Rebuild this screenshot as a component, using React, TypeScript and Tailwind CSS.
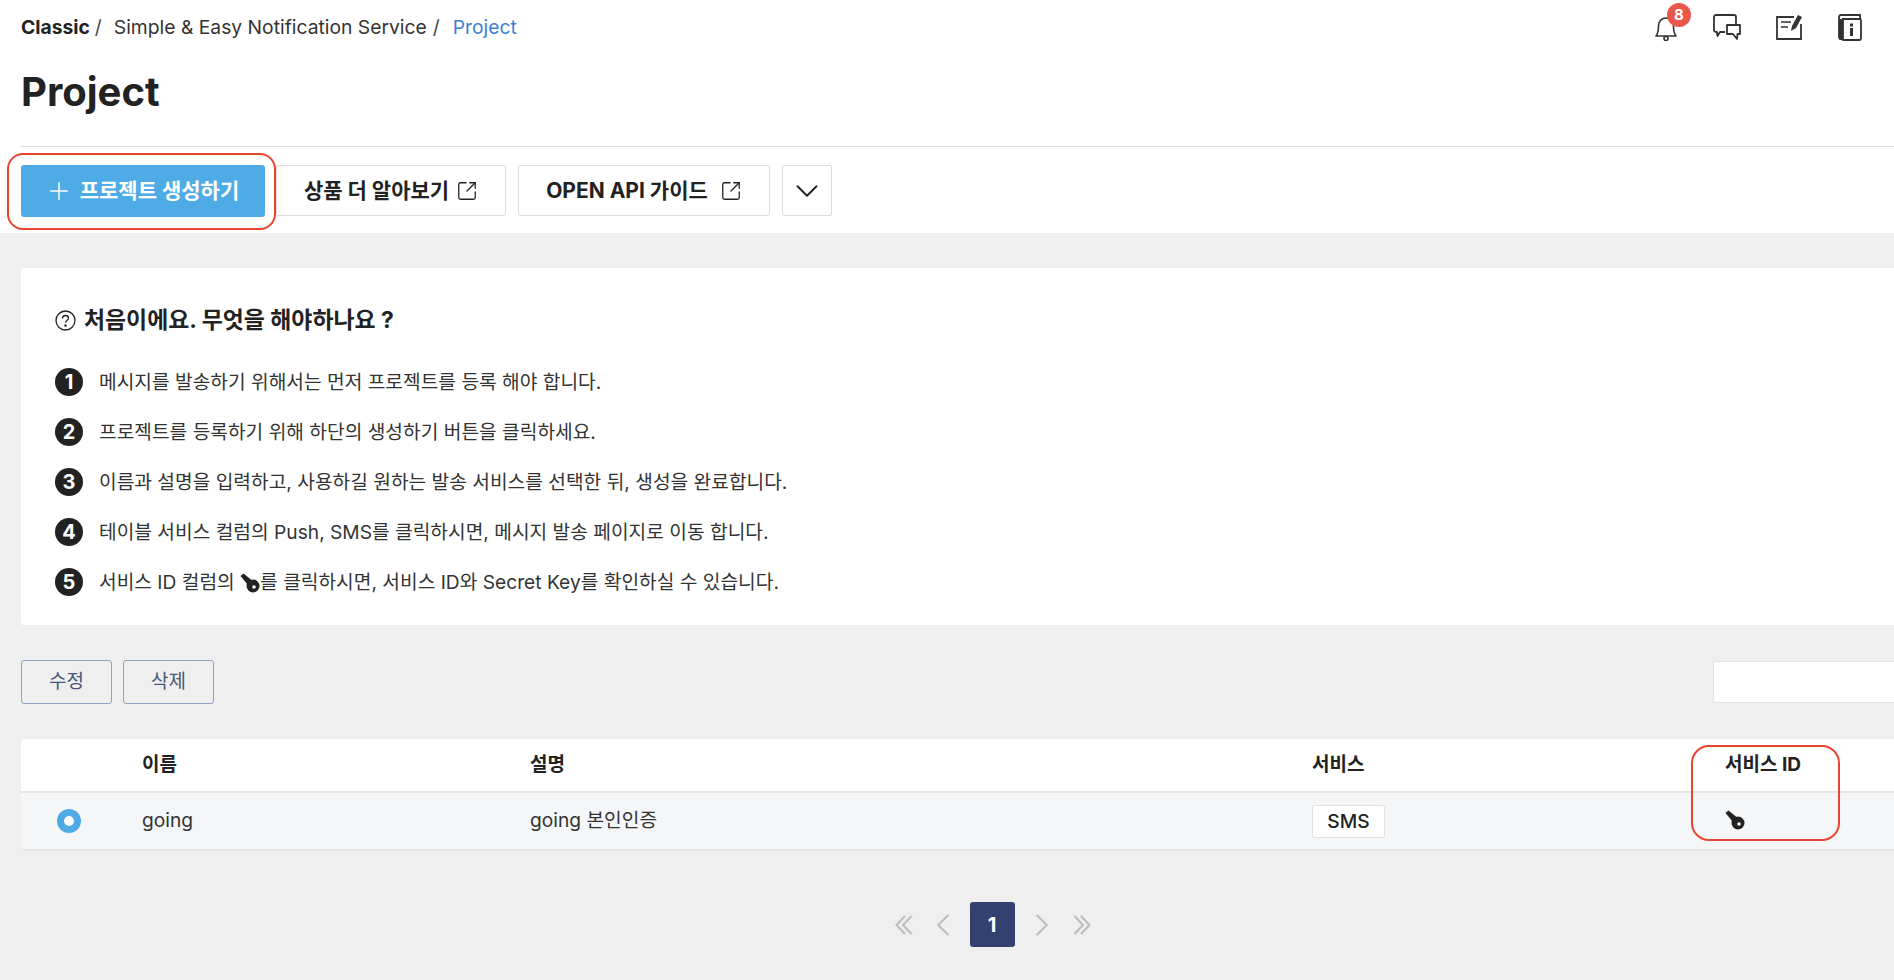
import React from "react";
import { ChevronDown, ChevronLeft, ChevronRight, Plus, SquareArrowOutUpRight } from "lucide-react";

const steps: React.ReactNode[] = [
  "메시지를 발송하기 위해서는 먼저 프로젝트를 등록 해야 합니다.",
  "프로젝트를 등록하기 위해 하단의 생성하기 버튼을 클릭하세요.",
  "이름과 설명을 입력하고, 사용하길 원하는 발송 서비스를 선택한 뒤, 생성을 완료합니다.",
  "테이블 서비스 컬럼의 Push, SMS를 클릭하시면, 메시지 발송 페이지로 이동 합니다.",
  <>
    서비스 ID 컬럼의 <KeyIcon className="inline-block align-[-4px]" />를 클릭하시면, 서비스 ID와 Secret Key를 확인하실 수 있습니다.
  </>,
];

function KeyIcon({ className = "" }: { className?: string }) {
  return (
    <svg width="20" height="20" viewBox="0 0 20 20" className={className}>
      <path d="M0.5 3 L3.5 0.5 L11.5 7 L7.5 11.5 Z" fill="#222" />
      <circle cx="13" cy="13" r="6.5" fill="#222" />
      <circle cx="14" cy="14" r="1.8" fill="#fff" />
    </svg>
  );
}

const BellIcon = () => (
  <svg width="24" height="28" viewBox="0 0 24 28" fill="none" stroke="#333" strokeWidth="1.6">
    <path d="M2 23 C4.5 20 4.5 17 4.5 13 C4.5 8 8 5 12 5 C16 5 19.5 8 19.5 13 C19.5 17 19.5 20 22 23 Z" strokeLinejoin="round" />
    <circle cx="12" cy="25.5" r="2" />
  </svg>
);

const ChatIcon = () => (
  <svg width="28" height="26" viewBox="0 0 28 26" fill="none" stroke="#333" strokeWidth="1.8" strokeLinejoin="round">
    <path d="M12 18 H7 L4.5 22 L4 18 H3 C1.8 18 1 17.2 1 16 V3 C1 1.8 1.8 1 3 1 H21 C22.2 1 23 1.8 23 3 V11" />
    <path d="M14 11 H27 V20 H24.5 L24 25 L20 20 H14 Z" />
  </svg>
);

const NoteIcon = () => (
  <svg width="26" height="26" viewBox="0 0 26 26" fill="none" stroke="#333" strokeWidth="1.8">
    <path d="M18 3 H1 V25 H25 V10" />
    <path d="M5 8 H15 M5 13 H12" strokeWidth="1.6" />
    <path d="M15 17 L16 12 L22 1 L26 3 L20 14 Z" fill="#333" stroke="none" />
  </svg>
);

const BookIcon = () => (
  <svg width="24" height="27" viewBox="0 0 24 27">
    <path d="M3 1 H22 V5 H5 V25 H3 C1.8 25 1 24.2 1 23 V3 C1 1.8 1.8 1 3 1 Z" fill="none" stroke="#333" strokeWidth="1.8" />
    <rect x="1" y="5" width="4" height="21" rx="1.5" fill="#333" />
    <rect x="4" y="5" width="19" height="21" rx="1.5" fill="none" stroke="#333" strokeWidth="1.8" />
    <rect x="12" y="9.5" width="3" height="3" fill="#333" />
    <rect x="12" y="14" width="3" height="8" fill="#333" />
  </svg>
);

const DoubleChevron = ({ flip = false }: { flip?: boolean }) => (
  <svg width="18" height="20" viewBox="0 0 18 20" fill="none" stroke="#bdbdbd" strokeWidth="2" className={flip ? "rotate-180" : ""}>
    <path d="M10 1 L1.5 10 L10 19" />
    <path d="M16.5 1 L8 10 L16.5 19" />
  </svg>
);

const App = () => {
  return (
    <div
      className="relative w-[1894px] h-[980px] overflow-hidden bg-[#efefef] text-[#222]"
      style={{ fontFamily: 'Inter, "Noto Sans CJK KR", sans-serif' }}
    >
      {/* Top area */}
      <header className="h-[233px] bg-white pl-[21px]">
        <div className="flex h-[54px] items-center justify-between">
          <nav className="flex items-center pt-[1px] text-[19.3px]">
            <span className="font-bold">Classic</span>
            <span className="ml-[5px] text-[#444]">/</span>
            <span className="ml-[12px] text-[#333]">Simple &amp; Easy Notification Service</span>
            <span className="ml-[6px] text-[#444]">/</span>
            <span className="ml-[13px] text-[#3d7fd4]">Project</span>
          </nav>
          <div className="flex items-center pr-[32px]">
            <div className="relative mr-[35px]">
              <BellIcon />
              <span className="absolute -top-[10px] left-[13px] flex h-[24px] w-[24px] items-center justify-center rounded-full bg-[#e8574a] text-[15px] font-bold text-white">
                8
              </span>
            </div>
            <div className="mr-[35px]"><ChatIcon /></div>
            <div className="mr-[36px]"><NoteIcon /></div>
            <BookIcon />
          </div>
        </div>
        <h1 className="flex h-[76px] items-center text-[40px] leading-none font-bold">Project</h1>
        <div className="mt-[16px] h-[1px] bg-[#d9d9d9]" />
        <div className="mt-[18px] flex items-start gap-[12px]">
          <button className="flex h-[52px] w-[244px] items-center justify-center gap-[7px] rounded-[3px] bg-[#4fabe6] pr-[2px] text-[21px] font-bold text-white">
            <Plus size={28} strokeWidth={1.3} />
            프로젝트 생성하기
          </button>
          <button className="-ml-[1px] flex h-[51px] w-[230px] items-center justify-center gap-[7px] rounded-[2px] border border-[#dcdcdc] bg-white text-[21px] font-bold">
            상품 더 알아보기
            <SquareArrowOutUpRight size={22} strokeWidth={1.4} />
          </button>
          <button className="flex h-[51px] w-[252px] items-center justify-center gap-[12px] rounded-[2px] border border-[#dcdcdc] bg-white text-[21px] font-bold">
            OPEN API 가이드
            <SquareArrowOutUpRight size={22} strokeWidth={1.4} />
          </button>
          <button className="flex h-[51px] w-[50px] items-center justify-center rounded-[2px] border border-[#dcdcdc] bg-white">
            <ChevronDown size={38} strokeWidth={1.2} />
          </button>
        </div>
      </header>

      <main className="w-[1950px] pl-[21px]">
        {/* Guide card */}
        <section className="mt-[35px] h-[357px] rounded-[3px] bg-white pt-[37px] pl-[34px]">
          <h2 className="flex h-[30px] items-center gap-[8px] text-[22.9px] font-bold">
            <svg width="21" height="21" viewBox="0 0 21 21" fill="none" stroke="#222" strokeWidth="1.3">
              <circle cx="10.5" cy="10.5" r="9.5" />
              <path d="M7.5 8.5 C7.5 6.5 9 5.5 10.5 5.5 C12.2 5.5 13.5 6.6 13.5 8.2 C13.5 10.2 10.5 10.5 10.5 12.8" />
              <circle cx="10.5" cy="15.5" r="0.6" fill="#222" />
            </svg>
            처음이에요. 무엇을 해야하나요 ?
          </h2>
          <ol className="mt-[22px]">
            {steps.map((step, index) => (
              <li key={index} className="flex h-[50px] items-center gap-[16px] text-[19.2px] text-[#333]">
                <span className="flex h-[28px] w-[28px] items-center justify-center rounded-full bg-[#222] text-[20px] font-bold text-white">
                  {index + 1}
                </span>
                <span>{step}</span>
              </li>
            ))}
          </ol>
        </section>

        {/* Actions */}
        <div className="mt-[35px] flex items-center justify-between">
          <div className="flex gap-[11px]">
            <button className="h-[44px] w-[91px] rounded-[3px] border border-[#8fa3c4] text-[19px] text-[#46587a]">수정</button>
            <button className="h-[44px] w-[91px] rounded-[3px] border border-[#8fa3c4] text-[19px] text-[#46587a]">삭제</button>
          </div>
          <input className="h-[42px] w-[237px] rounded-[2px] border border-[#e4e4e4] bg-white" />
        </div>

        {/* Table */}
        <div className="mt-[35px] overflow-hidden rounded-[3px] border-b-2 border-[#e6e6e6]">
          <div className="grid h-[54px] grid-cols-[121px_388px_782px_413px_1fr] items-center border-b-2 border-[#e6e6e6] bg-white text-[19px] font-bold">
            <div />
            <div>이름</div>
            <div>설명</div>
            <div>서비스</div>
            <div>서비스 ID</div>
          </div>
          <div className="grid h-[56px] grid-cols-[121px_388px_782px_413px_1fr] items-center bg-[#f5f6f8] text-[19.2px] text-[#333]">
            <div className="pl-[36px] pb-[1px]">
              <span className="flex h-[24px] w-[24px] items-center justify-center rounded-full bg-[#4fabe6]">
                <span className="h-[10px] w-[10px] rounded-full bg-white" />
              </span>
            </div>
            <div className="pb-[1px]">going</div>
            <div className="pb-[1px]">going 본인인증</div>
            <div>
              <span className="inline-flex h-[33px] w-[73px] items-center justify-center rounded-[2px] border border-[#e0e0e0] bg-white font-medium text-[#222]">
                SMS
              </span>
            </div>
            <div className="pb-[2px]"><KeyIcon /></div>
          </div>
        </div>
      </main>

      {/* Pagination */}
      <div className="mt-[51px] flex items-center pl-[895px]">
        <DoubleChevron />
        <ChevronLeft size={38} strokeWidth={1.3} className="ml-[11px] text-[#bdbdbd]" />
        <span className="ml-[8px] flex h-[45px] w-[45px] items-center justify-center rounded-[3px] bg-[#334170] pr-[1px] text-[20px] font-bold text-white">
          1
        </span>
        <ChevronRight size={38} strokeWidth={1.3} className="ml-[8px] text-[#bdbdbd]" />
        <span className="ml-[12px]"><DoubleChevron flip /></span>
      </div>

      {/* Red annotation boxes */}
      <div className="absolute top-[153px] left-[7px] h-[77px] w-[269px] rounded-[16px] border-2 border-[#e8452f]" />
      <div className="absolute top-[745px] left-[1691px] h-[96px] w-[149px] rounded-[18px] border-2 border-[#e8452f]" />
    </div>
  );
};

export default App;
